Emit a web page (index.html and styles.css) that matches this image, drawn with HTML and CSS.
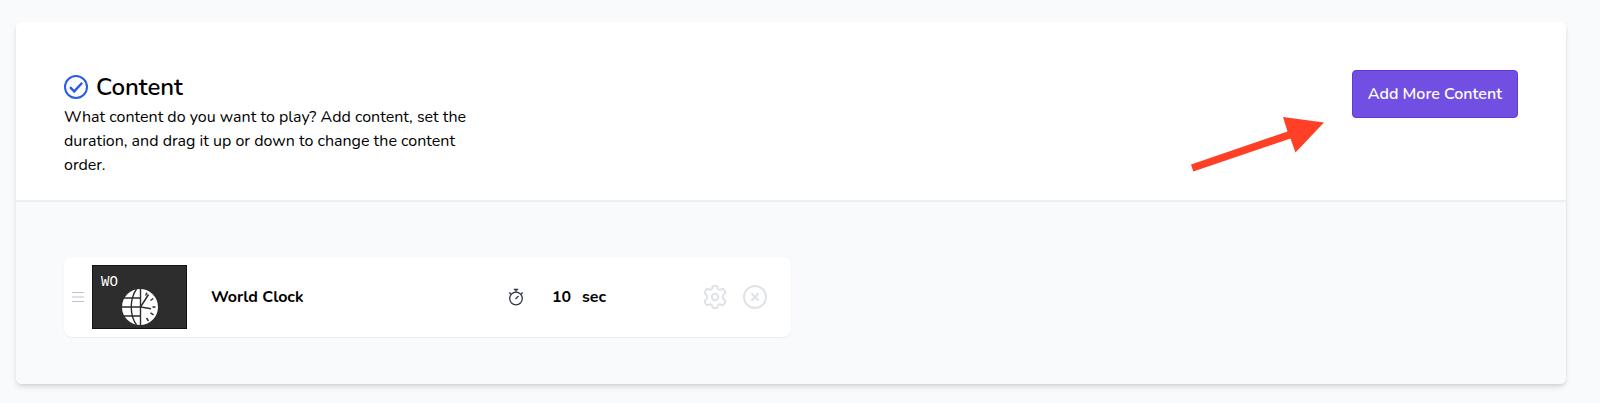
FILE: index.html
```html
<!DOCTYPE html>
<html lang="en">
<head>
    <meta charset="UTF-8">
    <meta name="viewport" content="width=device-width, initial-scale=1.0">
    <title>Playlist Content</title>
    <link rel="stylesheet" href="styles.css">
</head>
<body>
    <section class="card">
        <!-- Card header -->
        <header class="card-header">
            <div class="intro">
                <h2>
                    <svg class="check-icon" viewBox="0 0 24 24" fill="none" stroke="currentColor" stroke-width="2">
                        <circle cx="12" cy="12" r="11"/>
                        <path d="M6 12.2l4.2 4.2 8-8.6" stroke-width="2.4"/>
                    </svg>
                    Content
                </h2>
                <p>What content do you want to play? Add content, set the duration, and drag it up or down to change the content order.</p>
            </div>

            <div class="actions">
                <button type="button" class="add-button">Add More Content</button>
                <svg class="arrow" viewBox="0 0 133 54" fill="#ff4026">
                    <path d="M0 47.5L96.500 14.500 92 0l41 5.500L104.500 35.500 99.500 21.500 2.300 54.500z"/>
                </svg>
            </div>
        </header>

        <!-- Playlist items -->
        <div class="card-body">
            <ul class="playlist">
                <li class="item">
                    <svg class="drag-handle" viewBox="0 0 12 10" stroke="currentColor">
                        <path d="M0 .5h12M0 5h12M0 9.500h12"/>
                    </svg>

                    <div class="thumb">
                        <span>WO</span>
                        <svg class="globe" viewBox="0 0 36 36" fill="none" stroke="#2d2d2d">
                            <circle cx="18" cy="18" r="18" fill="#fff" stroke="none"/>
                            <path d="M18.500 0v36M0 18h18M2 9h16M2 27h16M14.500 0C7.500 10 7.500 26 14.500 36" stroke-width="1.400"/>
                            <path d="M26.500 5.500L18.500 18l10.500 1.800" stroke-width="1.500"/>
                            <path d="M23.500 6.500l1.500-2.800M28.500 11.500l2.800-2M30.500 18h3M28.500 23.800l3 2M24.500 29l2 3" stroke-width="1.400"/>
                        </svg>
                    </div>

                    <span class="item-name">World Clock</span>

                    <label class="duration">
                        <svg class="stopwatch" viewBox="0 0 16 18" fill="none" stroke="#2d3748">
                            <circle cx="8" cy="10.500" r="6.300" stroke-width="1.300"/>
                            <path d="M5.800 1.500h4.400M8 1.500v2.700M1.300 4.500l1.500 1.500M14.700 4.500l-1.500 1.500M7.500 11l3-3" stroke-width="1.300"/>
                        </svg>
                        <input type="text" value="10" aria-label="Duration in seconds">
                        <span>sec</span>
                    </label>

                    <div class="item-actions">
                        <button type="button" aria-label="Settings">
                            <svg viewBox="0 0 24 24" fill="none" stroke="currentColor" stroke-width="2" stroke-linejoin="round">
                                <path d="M9.200 3.200Q9.400 1 11 1h2q1.600 0 1.800 2.200 .2 1.400 1.500 1.600 .9 .2 1.700-.4 1.900-1.200 2.900 .3l1.200 2q.8 1.500-1.100 2.700-1.200 .8-1.200 2.600t1.200 2.600q1.900 1.200 1.100 2.700l-1.200 2q-1 1.500-2.900 .3-.8-.6-1.700-.4-1.300 .2-1.500 1.600Q14.600 23 13 23h-2q-1.600 0-1.800-2.200-.2-1.400-1.500-1.600-.9-.2-1.700 .4-1.900 1.200-2.900-.3l-1.200-2q-.8-1.500 1.100-2.700 1.200-.8 1.200-2.600T3 9.400Q1.100 8.200 1.900 6.700l1.200-2q1-1.500 2.900-.3 .8 .6 1.700 .4Q9 4.600 9.200 3.200z"/>
                                <circle cx="12" cy="12" r="3.200"/>
                            </svg>
                        </button>
                        <button type="button" aria-label="Remove">
                            <svg viewBox="0 0 24 24" fill="none" stroke="currentColor" stroke-width="2">
                                <circle cx="12" cy="12" r="11"/>
                                <path d="M8.300 8.300l7.400 7.400M15.700 8.300l-7.400 7.400"/>
                            </svg>
                        </button>
                    </div>
                </li>
            </ul>
        </div>
    </section>
</body>
</html>
```
FILE: styles.css
```css
* {
    box-sizing: border-box;
}

body {
    margin: 0;
    padding: 22px 34px 18px 16px;
    background-color: #f8fafc;
    color: #000;
    font-family: Nunito, Lato, "Open Sans", sans-serif;
    font-size: 16px;
    line-height: 24px;
}

svg {
    display: block;
    flex-shrink: 0;
}

button {
    font: inherit;
    cursor: pointer;
}

/* Card */
.card {
    border-radius: 6px;
    box-shadow: 0 4px 6px -1px rgba(0, 0, 0, 0.1), 0 2px 4px -1px rgba(0, 0, 0, 0.1);
}

.card-header {
    display: flex;
    justify-content: space-between;
    align-items: flex-start;
    padding: 48px 48px 23px;
    background-color: #fff;
    border-bottom: 2px solid #edf0f2;
    border-radius: 6px 6px 0 0;
}

.intro {
    max-width: 416px;
}

.intro h2 {
    display: flex;
    align-items: center;
    gap: 8px;
    margin: 0 0 1px;
    font-size: 24px;
    font-weight: 600;
    line-height: 34px;
}

.intro p {
    margin: 0;
}

.check-icon {
    width: 24px;
    height: 24px;
    color: #2b5ce8;
}

.actions {
    position: relative;
}

.add-button {
    padding: 11px 15px;
    background-color: #704fe2;
    color: #fff;
    border: 1px solid #6038dd;
    border-radius: 4px;
    font-weight: 600;
}

/* Arrow pointing at the button */
.arrow {
    position: absolute;
    top: 47px;
    right: calc(100% + 28px);
    width: 133px;
    height: 54px;
    overflow: visible;
}

.card-body {
    padding: 55px 48px 47px;
    background-color: #f8fafc;
    border-radius: 0 0 6px 6px;
}

/* Playlist */
.playlist {
    width: 50%;
    margin: 0;
    padding: 0;
    list-style: none;
}

.item {
    display: flex;
    align-items: center;
    padding: 8px 24px 8px 8px;
    background-color: #fff;
    border-radius: 8px;
    box-shadow: 0 1px 2px rgba(0, 0, 0, 0.06);
    font-weight: 700;
}

.drag-handle {
    width: 12px;
    height: 10px;
    margin-right: 8px;
    color: #bcc3cd;
}

.thumb {
    display: flex;
    flex-direction: column;
    width: 95px;
    height: 64px;
    padding: 9px 8px 0;
    background-color: #2d2d2d;
    border: 1px solid #111;
    color: #fff;
    font-family: "Liberation Mono", monospace;
    font-size: 14px;
    font-weight: 400;
    line-height: 14px;
}

.globe {
    width: 36px;
    height: 36px;
    align-self: center;
}

.item-name {
    flex: 1;
    margin-left: 24px;
}

.duration {
    display: flex;
    align-items: center;
    margin-right: 97px;
}

.stopwatch {
    width: 16px;
    height: 18px;
    margin-right: 28px;
}

.duration input {
    width: 20px;
    margin-right: 10px;
    padding: 0;
    border: 0;
    background: none;
    color: inherit;
    font: inherit;
}

.item-actions {
    display: flex;
    gap: 16px;
}

.item-actions button {
    padding: 0;
    border: 0;
    background: none;
    color: #dde3e7;
}

.item-actions svg {
    width: 24px;
    height: 24px;
}
```
